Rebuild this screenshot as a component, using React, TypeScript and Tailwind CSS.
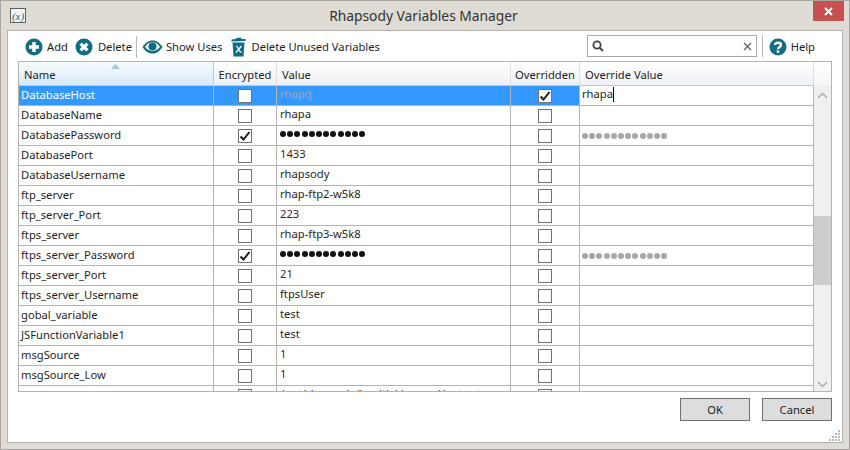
import React from "react";

type Row = {
  name: string;
  enc?: boolean;
  value: string;
  over?: boolean;
  secret?: boolean;
};

const rows: Row[] = [
  { name: "DatabaseName", value: "rhapa" },
  { name: "DatabasePassword", enc: true, value: "", secret: true },
  { name: "DatabasePort", value: "1433" },
  { name: "DatabaseUsername", value: "rhapsody" },
  { name: "ftp_server", value: "rhap-ftp2-w5k8" },
  { name: "ftp_server_Port", value: "223" },
  { name: "ftps_server", value: "rhap-ftp3-w5k8" },
  { name: "ftps_server_Password", enc: true, value: "", secret: true },
  { name: "ftps_server_Port", value: "21" },
  { name: "ftps_server_Username", value: "ftpsUser" },
  { name: "gobal_variable", value: "test" },
  { name: "JSFunctionVariable1", value: "test" },
  { name: "msgSource", value: "1" },
  { name: "msgSource_Low", value: "1" },
  { name: "", value: "/opt/rhapsody/health/demand/output" },
];

const cols = "grid grid-cols-[195px_63px_234px_69px_234px]";

function Check({ on }: { on?: boolean }) {
  return (
    <span className="w-[14px] h-[14px] border border-[#707070] bg-white flex items-center justify-center">
      {on && (
        <svg width="12" height="12" viewBox="0 0 12 12">
          <path d="M1.5 6.5 L4.5 9.5 L10.5 2" fill="none" stroke="#1c1c1c" strokeWidth="2" />
        </svg>
      )}
    </span>
  );
}

function Dots({ gray }: { gray?: boolean }) {
  return (
    <span className={`flex gap-[1.2px] ${gray ? "text-[#a8a8a8]" : "text-[#111]"}`}>
      {Array.from({ length: 12 }).map((_, i) => (
        <span key={i} className="w-[6px] h-[6px] rounded-full bg-current" />
      ))}
    </span>
  );
}

function Sep() {
  return <span className="block w-px h-[22px] bg-[#b8b8b8]" />;
}

function CircleIcon({ children }: { children: React.ReactNode }) {
  return (
    <svg className="block" width="18" height="18" viewBox="0 0 18 18">
      <circle cx="9" cy="9" r="8.5" fill="#0f6d85" />
      {children}
    </svg>
  );
}

export default function App() {
  return (
    <div className="w-[850px] h-[450px] bg-[#dfdbd5] border border-[#a9a6a1] flex flex-col px-[6px] pb-[6px] text-[11.2px] leading-[16px] text-[#1e1e1e] font-['Noto_Sans','Open_Sans',sans-serif] overflow-hidden">
      {/* title bar */}
      <div className="h-[29px] shrink-0 flex items-center relative">
        <span className="ml-[3px] w-[16px] h-[15px] border border-[#5e5e5e] bg-[#f4f4f2] flex items-center justify-center text-[11px] italic text-[#0f6d85] font-['Liberation_Serif',serif]">
          (x)
        </span>
        <span className="flex-1 text-center text-[13.8px] text-[#333] pr-[22px]">Rhapsody Variables Manager</span>
        <span className="absolute right-[-1px] top-0 w-[31px] h-[20px] bg-[#c75050] flex items-center justify-center">
          <svg width="9" height="9" viewBox="0 0 9 9">
            <path d="M1 1 L8 8 M8 1 L1 8" stroke="#fff" strokeWidth="2" />
          </svg>
        </span>
      </div>

      {/* panel */}
      <div className="flex-1 bg-white border border-[#b5b2ad] flex flex-col pl-[10px] pr-[10px] relative">
        {/* toolbar */}
        <div className="h-[30px] shrink-0 flex items-center pl-[7px] pr-[17px] pt-[1px]">
          <CircleIcon>
            <path d="M9 4 V14 M4 9 H14" stroke="#fff" strokeWidth="3.4" />
          </CircleIcon>
          <span className="ml-[4px]">Add</span>
          <span className="ml-[7px]">
            <CircleIcon>
              <path d="M5.6 5.6 L12.4 12.4 M12.4 5.6 L5.6 12.4" stroke="#fff" strokeWidth="3.2" />
            </CircleIcon>
          </span>
          <span className="ml-[5px]">Delete</span>
          <span className="ml-[4px]"><Sep /></span>
          <svg className="ml-[5px]" width="21" height="14" viewBox="0 0 21 14">
            <path d="M0.5 7 C4 2 7 0.5 10.5 0.5 C14 0.5 17 2 20.5 7 C17 12 14 13.5 10.5 13.5 C7 13.5 4 12 0.5 7 Z" fill="#0f6d85" />
            <path d="M3 7 C5 3.6 8 2.2 10.5 2.2 C13 2.2 16 3.6 18 7 C16 9.6 13 11 10.5 11 C8 11 5 9.6 3 7 Z" fill="#fff" />
            <circle cx="10.5" cy="6.6" r="4" fill="#0f6d85" />
          </svg>
          <span className="ml-[3px]">Show Uses</span>
          <svg className="ml-[9px]" width="15" height="20" viewBox="0 0 15 20">
            <path d="M5 1 L10 0.5 L10.5 2 L14.5 2 L14.5 4 L0.5 4.5 L0.5 2.5 L5 2 Z" fill="#0f6d85" />
            <path d="M1.5 5.5 H13.5 L12.5 19.5 H2.5 Z" fill="#0f6d85" />
            <path d="M5 9 C6 9 6.5 9.5 7.5 12 C8.5 14.5 9 15.5 10.5 15 M10.5 9 L5 15.5" fill="none" stroke="#fff" strokeWidth="1.2" />
          </svg>
          <span className="ml-[5px]">Delete Unused Variables</span>

          <div className="ml-auto mb-[1px] w-[170px] h-[22px] border border-[#a8a8a8] flex items-center justify-between px-[4px]">
            <svg width="12" height="12" viewBox="0 0 12 12">
              <circle cx="5" cy="5" r="3.6" fill="none" stroke="#444" strokeWidth="1.8" />
              <path d="M7.6 7.6 L11 11" stroke="#444" strokeWidth="2" />
            </svg>
            <svg width="9" height="9" viewBox="0 0 9 9">
              <path d="M1 1 L8 8 M8 1 L1 8" stroke="#666" strokeWidth="1.4" />
            </svg>
          </div>
          <span className="ml-[5px] mb-[1px]"><Sep /></span>
          <span className="ml-[6px]">
            <CircleIcon>
              <path d="M6 7 C6 4 12 4 12 7 C12 9 9 9 9 11.2" fill="none" stroke="#fff" strokeWidth="2.4" />
              <rect x="7.7" y="12.4" width="2.6" height="2.4" fill="#fff" />
            </CircleIcon>
          </span>
          <span className="ml-[4px]">Help</span>
        </div>

        {/* table */}
        <div className="h-[331px] shrink-0 border border-[#b4b4b4] flex overflow-hidden">
          <div className="w-[795px] shrink-0 flex flex-col">
            <div className={`${cols} h-[24px] shrink-0 border-b border-[#c8c8c8] bg-gradient-to-b from-white to-[#eef1f4]`}>
              <div className="relative pl-[5px] pt-[5px] border-r border-[#a8cfe8] bg-gradient-to-b from-[#f6fbfe] to-[#d8eaf6]">
                Name
                <svg className="absolute left-[92px] top-[2px]" width="9" height="5" viewBox="0 0 9 5">
                  <path d="M4.5 0 L9 5 H0 Z" fill="#a8c4d8" />
                </svg>
              </div>
              <div className="text-center pt-[5px] border-r border-[#e0e0e0]">Encrypted</div>
              <div className="pl-[5px] pt-[5px] border-r border-[#e0e0e0]">Value</div>
              <div className="text-center pt-[5px] border-r border-[#e0e0e0]">Overridden</div>
              <div className="pl-[5px] pt-[5px] border-r border-[#e0e0e0]">Override Value</div>
            </div>

            {/* selected row, in edit */}
            <div className={`${cols} h-[20px] shrink-0 border-b border-[#b4b4b4]`}>
              <div className="bg-[#3399ff] text-white pl-[2px] pb-[1px] flex items-center border-r border-[#b4b4b4]">DatabaseHost</div>
              <div className="bg-[#3399ff] flex items-center justify-center border-r border-[#b4b4b4]"><Check /></div>
              <div className="bg-[#3399ff] text-[#9fa7b0] pl-[3px] pb-[3px] flex items-center border-r border-[#b4b4b4]">rhapq</div>
              <div className="bg-[#3399ff] flex items-center justify-center border-r border-[#b4b4b4]"><Check on /></div>
              <div className="bg-white pl-[2px] pb-[3px] flex items-center border-r border-[#b4b4b4]">
                rhapa<span className="w-px h-[15px] bg-black" />
              </div>
            </div>

            {rows.map((r, i) => (
              <div key={i} className={`${cols} h-[20px] shrink-0 border-b border-[#b4b4b4]`}>
                <div className="pl-[2px] pb-[1px] flex items-center border-r border-[#b4b4b4]">{r.name}</div>
                <div className="flex items-center justify-center border-r border-[#b4b4b4]"><Check on={r.enc} /></div>
                <div className={`pl-[3px] pb-[3px] flex items-center border-r border-[#b4b4b4] ${/^\d+$/.test(r.value) ? "text-[#4a1528]" : ""}`}>
                  {r.secret ? <Dots /> : r.value}
                </div>
                <div className="flex items-center justify-center border-r border-[#b4b4b4]"><Check /></div>
                <div className="pl-[2px] flex items-center border-r border-[#b4b4b4]">
                  {r.secret && <Dots gray />}
                </div>
              </div>
            ))}
          </div>

          {/* scrollbar column */}
          <div className="flex-1 flex flex-col">
            <div className="h-[24px] shrink-0 bg-gradient-to-b from-white to-[#f4f5f6]" />
            <div className="flex-1 bg-[#f0f0f0] flex flex-col items-center pt-[6px] pb-[3px]">
              <svg width="11" height="7" viewBox="0 0 11 7">
                <path d="M1 6 L5.5 1.5 L10 6" fill="none" stroke="#a8a8a8" strokeWidth="1.4" />
              </svg>
              <div className="w-full h-[69px] bg-[#cdcdcd] mt-[117px]" />
              <svg className="mt-auto" width="11" height="7" viewBox="0 0 11 7">
                <path d="M1 1 L5.5 5.5 L10 1" fill="none" stroke="#a8a8a8" strokeWidth="1.4" />
              </svg>
            </div>
          </div>
        </div>

        {/* buttons */}
        <div className="flex justify-end gap-[12px] mt-[6px]">
          <button className="w-[70px] h-[23px] bg-[#dddddd] border border-[#707070]">OK</button>
          <button className="w-[70px] h-[23px] bg-[#dddddd] border border-[#707070]">Cancel</button>
        </div>

        {/* resize grip */}
        <svg className="absolute right-[1px] bottom-[1px]" width="12" height="12" viewBox="0 0 12 12">
          <path d="M9 1h2v2H9z M6 4h2v2H6z M9 4h2v2H9z M3 7h2v2H3z M6 7h2v2H6z M9 7h2v2H9z M0 10h2v2H0z M3 10h2v2H3z M6 10h2v2H6z M9 10h2v2H9z" fill="#b8b8b8" />
        </svg>
      </div>
    </div>
  );
}
